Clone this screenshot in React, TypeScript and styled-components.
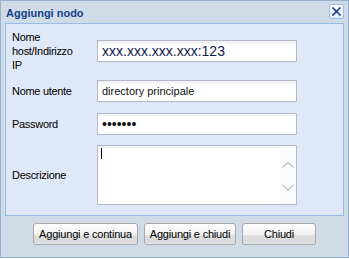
import styled, { createGlobalStyle } from "styled-components";

const GlobalStyle = createGlobalStyle`
  html, body {
    margin: 0;
    padding: 0;
    background: #ffffff;
  }
  body {
    font-family: "Liberation Sans", Arial, sans-serif;
  }
`;

const fields = [
  { label: "Nome host/Indirizzo IP", value: "xxx.xxx.xxx.xxx:123", big: true, mt: 0 },
  { label: "Nome utente", value: "directory principale", mt: 8 },
  { label: "Password", value: "1234567", password: true, mt: 11 },
];

const App = () => {
  return (
    <>
      <GlobalStyle />
      <Window>
        <TitleBar>
          <Title>Aggiungi nodo</Title>
          <CloseButton aria-label="Chiudi">
            <svg width="9" height="9" viewBox="0 0 9 9">
              <path d="M1 1 L8 8 M8 1 L1 8" stroke="#15428b" strokeWidth="1.6" strokeLinecap="square" />
            </svg>
          </CloseButton>
        </TitleBar>

        <Body>
          {fields.map((f) => (
            <Row key={f.label} $mt={f.mt}>
              <Label>{f.label}</Label>
              <TextInput
                type={f.password ? "password" : "text"}
                defaultValue={f.value}
                $big={f.big || f.password}
                $color={f.big ? "#0f1a4c" : "#111"}
                readOnly
              />
            </Row>
          ))}
          <Row $mt={10}>
            <Label>Descrizione</Label>
            <AreaBox>
              <Area />
              <Caret />
              <ScrollTrack>
                <svg width="16" height="58" viewBox="0 0 16 58">
                  <polyline points="2.5,21.5 8,16.5 13.5,21.5" fill="none" stroke="#c6c6c6" strokeWidth="1.4" />
                  <polyline points="2.5,39 8,44 13.5,39" fill="none" stroke="#c6c6c6" strokeWidth="1.4" />
                </svg>
              </ScrollTrack>
            </AreaBox>
          </Row>
        </Body>

        <Footer>
          <Button $w={105}>Aggiungi e continua</Button>
          <Button $w={92}>Aggiungi e chiudi</Button>
          <Button $w={74}>Chiudi</Button>
        </Footer>
      </Window>
    </>
  );
};

const Window = styled.div`
  width: 349px;
  height: 258px;
  box-sizing: border-box;
  border: 1px solid #99afd1;
  background: #d0dbe8;
  display: flex;
  flex-direction: column;
`;

const TitleBar = styled.div`
  height: 22px;
  display: flex;
  align-items: center;
  justify-content: space-between;
  padding: 1px 4px 0 5px;
  box-sizing: border-box;
`;

const Title = styled.span`
  font-size: 11px;
  font-weight: bold;
  color: #15428b;
`;

const CloseButton = styled.button`
  width: 15px;
  height: 15px;
  padding: 0;
  margin-top: -2px;
  display: flex;
  align-items: center;
  justify-content: center;
  border: 1px solid #99bbe8;
  border-radius: 2px;
  background: linear-gradient(#ffffff, #e3ebf6);
  box-sizing: border-box;
`;

const Body = styled.div`
  margin: 0 4px;
  border: 1px solid #99bbe8;
  background: #dfe8f6;
  padding: 6px 0 10px 6px;
`;

const Row = styled.div<{ $mt: number }>`
  display: flex;
  align-items: center;
  margin-top: ${(p) => p.$mt}px;
`;

const Label = styled.div`
  width: 85px;
  box-sizing: border-box;
  padding-right: 16px;
  font-size: 11px;
  line-height: 14px;
  letter-spacing: -0.3px;
  color: #000;
`;

const TextInput = styled.input<{ $big?: boolean; $color: string }>`
  width: 200px;
  height: 22px;
  box-sizing: border-box;
  margin: 0;
  padding: 0 4px;
  border: 1px solid #b5b8c8;
  background: linear-gradient(#eeeeee, #ffffff 4px);
  font-family: "Liberation Sans", Arial, sans-serif;
  font-size: ${(p) => (p.$big ? 14 : 11)}px;
  color: ${(p) => p.$color};
  outline: none;
`;

const AreaBox = styled.div`
  position: relative;
  width: 200px;
  height: 60px;
  box-sizing: border-box;
  border: 1px solid #b5b8c8;
  background: linear-gradient(#eeeeee, #ffffff 4px);
  display: flex;
`;

const Area = styled.textarea`
  flex: 1;
  border: none;
  background: transparent;
  resize: none;
  outline: none;
  padding: 2px 4px;
  font-family: "Liberation Sans", Arial, sans-serif;
  font-size: 11px;
`;

const Caret = styled.span`
  position: absolute;
  left: 3px;
  top: 2px;
  width: 1px;
  height: 11px;
  background: #000;
`;

const ScrollTrack = styled.div`
  width: 16px;
  background: #fbfbfd;
  display: flex;
`;

const Footer = styled.div`
  display: flex;
  justify-content: center;
  gap: 6px;
  padding-top: 7px;
`;

const Button = styled.button<{ $w: number }>`
  width: ${(p) => p.$w}px;
  height: 22px;
  padding: 0;
  box-sizing: border-box;
  border: 1px solid #a9a9a9;
  border-radius: 3px;
  background: linear-gradient(#fcfcfc 0%, #f2f2f2 55%, #dcdcdc 58%, #dcdcdc 92%, #ececec 100%);
  font-family: "Liberation Sans", Arial, sans-serif;
  font-size: 11px;
  letter-spacing: -0.2px;
  color: #000;
`;

export default App;
